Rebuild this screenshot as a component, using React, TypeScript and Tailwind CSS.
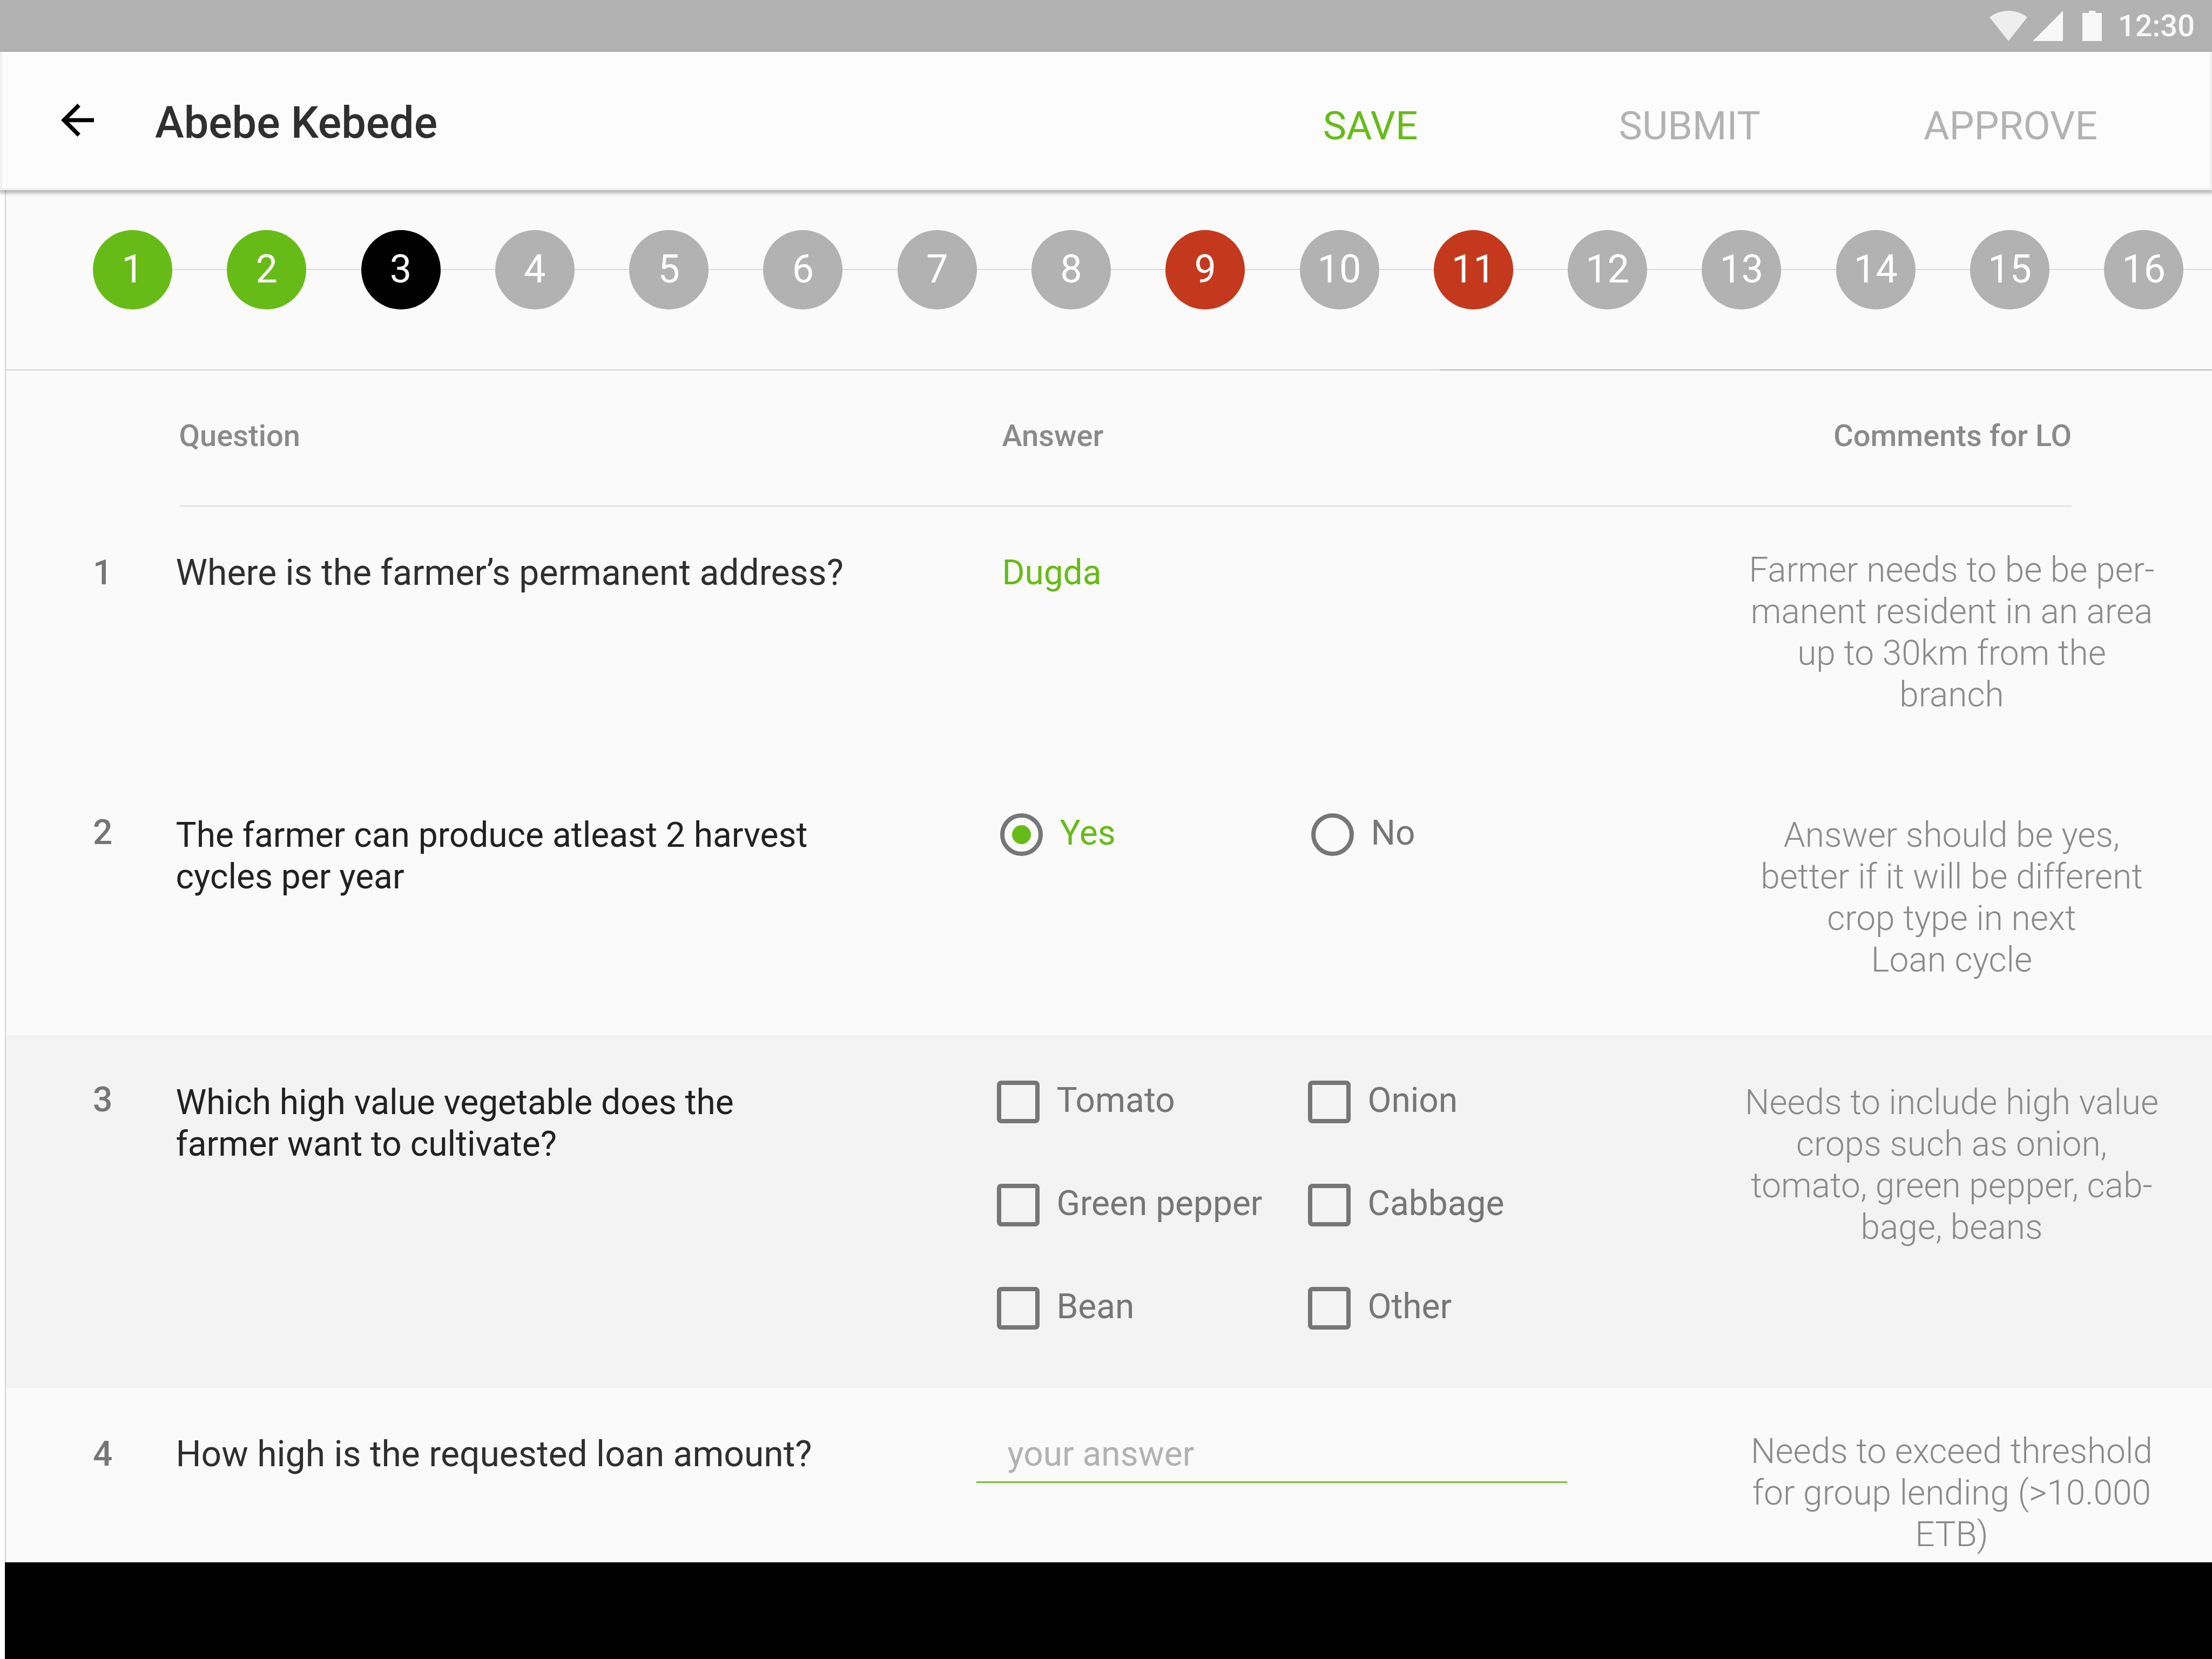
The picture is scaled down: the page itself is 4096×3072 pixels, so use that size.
import { Fragment, type ReactNode } from "react";

type StepState = "done" | "current" | "pending" | "error";

const stepStates: StepState[] = [
  "done", "done", "current", "pending", "pending", "pending", "pending", "pending",
  "error", "pending", "error", "pending", "pending", "pending", "pending", "pending",
];

const stepColors: Record<StepState, string> = {
  done: "bg-[#67bb17]",
  current: "bg-black",
  pending: "bg-[#b2b2b2]",
  error: "bg-[#c4391d]",
};

function StatusBar() {
  return (
    <div className="flex h-24 items-center justify-end bg-[#b2b2b2] pr-8 text-[#f8f8f8]">
      <svg className="h-14 w-[70px]" viewBox="0 0 70 56" aria-hidden="true">
        <path d="M35 56 0 12C10 4 22 0 35 0s25 4 35 12Z" fill="#eee" />
      </svg>
      <svg className="ml-2.5 h-14 w-14" viewBox="0 0 56 56" aria-hidden="true">
        <path d="M56 0v56H0Z" fill="currentColor" />
      </svg>
      <svg className="ml-9 h-14 w-9" viewBox="0 0 36 56" aria-hidden="true">
        <path d="M12 0h12v4h12v52H0V4h12Z" fill="currentColor" />
      </svg>
      <span className="ml-[30px] text-[56px] leading-[56px] font-medium">12:30</span>
    </div>
  );
}

function Header() {
  return (
    <header className="relative flex h-64 items-center border-x-4 border-b-4 border-[#f1f1f1] bg-[#fcfcfc] pr-[208px] pl-[109px] shadow-[0_4px_6px_2px_rgba(0,0,0,0.26)]">
      <button type="button" aria-label="Back">
        <svg className="h-[61px] w-[61px]" viewBox="4 4 16 16" aria-hidden="true">
          <path d="M20 11H7.83l5.59-5.59L12 4l-8 8 8 8 1.41-1.41L7.83 13H20v-2z" />
        </svg>
      </button>
      <h1 className="mt-3 ml-[113px] text-[81px] leading-[96px] font-medium text-[#2f2f2f]">Abebe Kebede</h1>
      <nav className="mt-[22px] ml-auto flex items-center text-[73px] leading-[88px] text-[#b2b2b2]">
        <button type="button" className="mr-[372px] text-[#67bb17]">SAVE</button>
        <button type="button" className="mr-[302px]">SUBMIT</button>
        <button type="button">APPROVE</button>
      </nav>
    </header>
  );
}

function Stepper() {
  return (
    <nav aria-label="Sections" className="flex h-[332px] items-center overflow-hidden pb-[38px] pl-[161px]">
      {stepStates.map((state, i) => (
        <Fragment key={i}>
          <button
            type="button"
            className={`size-[147px] shrink-0 rounded-full text-[72px] leading-[88px] text-white ${stepColors[state]}`}
          >
            {i + 1}
          </button>
          <span className={i === stepStates.length - 1 ? "h-0.5 flex-[0.52] bg-[#dcdcdc]" : "h-0.5 flex-1 bg-[#dcdcdc]"} />
        </Fragment>
      ))}
    </nav>
  );
}

function Radio({ label, checked }: { label: string; checked?: boolean }) {
  return (
    <label className="flex h-20 w-[576px] items-center gap-[31px]">
      <input
        type="radio"
        name="harvest"
        defaultChecked={checked}
        className="peer grid size-[79px] appearance-none place-items-center rounded-full border-8 border-[#767676] before:size-[35px] before:rounded-full checked:before:bg-[#67bb17]"
      />
      <span className="mb-1.5 text-[#767676] peer-checked:text-[#67bb17]">{label}</span>
    </label>
  );
}

function Checkbox({ label }: { label: string }) {
  return (
    <label className="flex h-20 items-center gap-[31px] text-[#767676]">
      <input
        type="checkbox"
        className="size-[79px] shrink-0 appearance-none rounded-lg border-8 border-[#767676] checked:bg-[#67bb17]"
      />
      <span className="mb-1.5 whitespace-nowrap">{label}</span>
    </label>
  );
}

type Row = {
  question: string[];
  answer: ReactNode;
  comment: string[];
  rowClass: string;
  tall: boolean;
};

const vegetables = ["Tomato", "Onion", "Green pepper", "Cabbage", "Bean", "Other"];

const rows: Row[] = [
  {
    question: ["Where is the farmer’s permanent address?"],
    answer: <p className="pl-[47px] text-[#67bb17]">Dugda</p>,
    comment: ["Farmer needs to be be per-", "manent resident in an area", "up to 30km from the", "branch"],
    rowClass: "h-[484px]",
    tall: false,
  },
  {
    question: ["The farmer can produce atleast 2 harvest", "cycles per year"],
    answer: (
      <div className="flex pl-11">
        <Radio label="Yes" checked />
        <Radio label="No" />
      </div>
    ),
    comment: ["Answer should be yes,", "better if it will be different", "crop type in next", "Loan cycle"],
    rowClass: "h-[495px]",
    tall: true,
  },
  {
    question: ["Which high value vegetable does the", "farmer want to cultivate?"],
    answer: (
      <div className="grid grid-cols-[576px_576px] gap-y-[111px] pl-[38px]">
        {vegetables.map((v) => (
          <Checkbox key={v} label={v} />
        ))}
      </div>
    ),
    comment: ["Needs to include high value", "crops such as onion,", "tomato, green pepper, cab-", "bage, beans"],
    rowClass: "h-[653px] bg-[#f3f3f3]",
    tall: true,
  },
  {
    question: ["How high is the requested loan amount?"],
    answer: (
      <input
        type="text"
        aria-label="Requested loan amount"
        placeholder="your answer"
        className="block h-[92px] w-[1094px] border-b-3 border-[#74c22c] bg-transparent pb-3 pl-[57px] outline-none placeholder:text-[#b2b2b2]"
      />
    ),
    comment: ["Needs to exceed threshold", "for group lending (>10.000", "ETB)"],
    rowClass: "h-[323px]",
    tall: false,
  },
];

function Lines({ lines }: { lines: string[] }) {
  return (
    <>
      {lines.map((line) => (
        <span key={line} className="block whitespace-nowrap">{line}</span>
      ))}
    </>
  );
}

function Questions() {
  return (
    <table className="w-full table-fixed border-collapse text-[64px] leading-[77px]">
      <colgroup>
        <col className="w-[7.7%]" />
        <col className="w-[36.3%]" />
        <col className="w-[32.4%]" />
        <col />
      </colgroup>
      <thead className="text-[56px] font-medium text-[#8a8a8a]">
        <tr>
          <th aria-label="Number" />
          <th className="p-0 pl-1.5 text-left font-medium">
            <div className="h-[252px] border-b-2 border-[#dcdcdc] pt-[83px]">Question</div>
          </th>
          <th className="p-0 text-left font-medium">
            <div className="h-[252px] border-b-2 border-[#dcdcdc] pt-[83px] pl-[47px]">Answer</div>
          </th>
          <th className="p-0 pr-[260px] text-right font-medium">
            <div className="h-[252px] border-b-2 border-[#dcdcdc] pt-[83px]">Comments for LO</div>
          </th>
        </tr>
      </thead>
      <tbody>
        {rows.map((row, i) => (
          <tr key={i} className={`align-top ${row.rowClass}`}>
            <td className={`pl-[161px] font-medium text-[#767676] ${row.tall ? "pt-[81px]" : "pt-[84px]"}`}>{i + 1}</td>
            <td className={row.tall ? "pt-[86px] text-[#212121]" : "pt-[84px] text-[66px] text-[#2f2f2f]"}>
              <Lines lines={row.question} />
            </td>
            <td className={row.tall ? "pt-[83px]" : "pt-[84px]"}>{row.answer}</td>
            <td className={`text-center font-light text-[#8a8a8a] ${row.tall ? "pt-[86px]" : "pt-[79px]"}`}>
              <Lines lines={row.comment} />
            </td>
          </tr>
        ))}
      </tbody>
    </table>
  );
}

export default function App() {
  return (
    <div className="flex min-h-screen flex-col bg-white font-[Roboto,sans-serif]">
      <StatusBar />
      <Header />
      <div className="ml-[9px] flex flex-1 flex-col">
        <main className="border-l-2 border-[#d2d2d2] bg-[#fafafa]">
          <Stepper />
          <div className="flex h-0.5">
            <div className="w-[65%] bg-[#d2d2d2]" />
            <div className="flex-1 bg-[#b8b8b8]" />
          </div>
          <Questions />
        </main>
        <footer className="flex-1 bg-black" />
      </div>
    </div>
  );
}
